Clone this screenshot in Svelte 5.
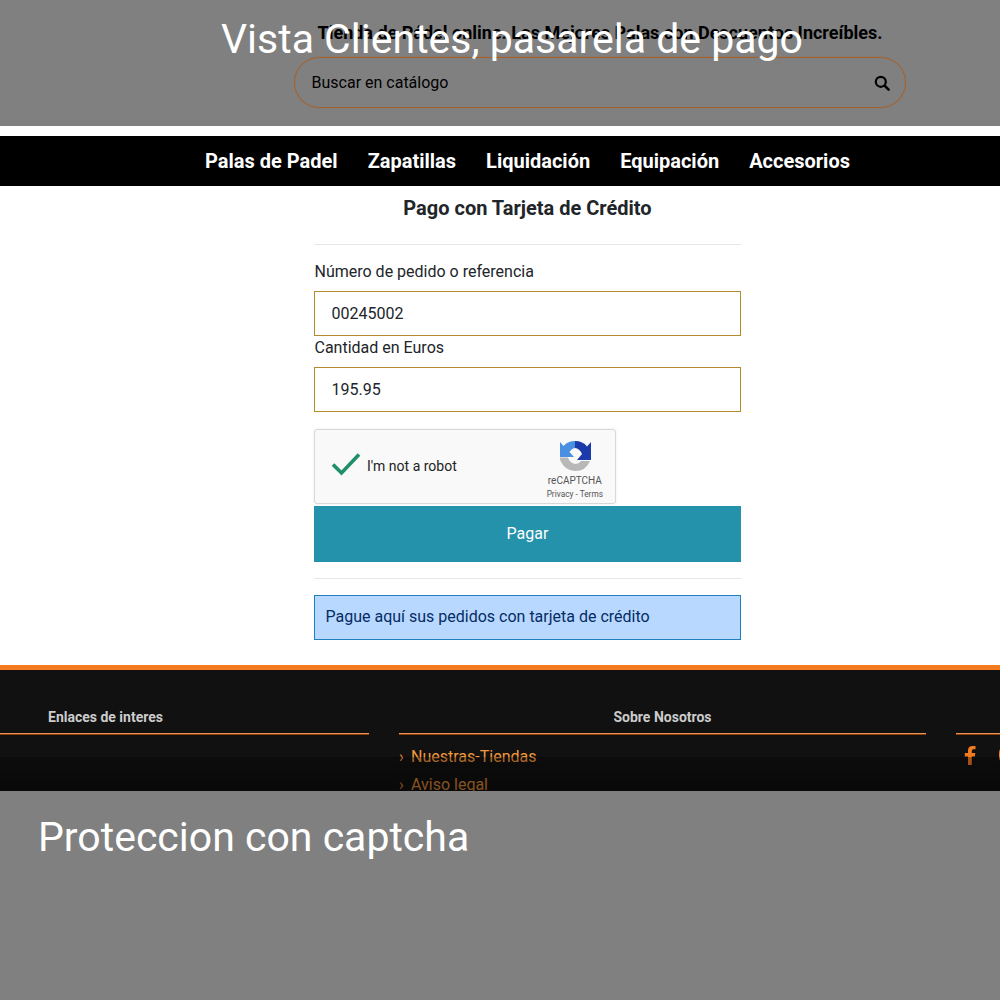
<script>
  const navLinks = ["Palas de Padel", "Zapatillas", "Liquidación", "Equipación", "Accesorios"];
  const aboutLinks = ["Nuestras-Tiendas", "Aviso legal"];
</script>

<div class="page">
  <header class="top">
    <h1 class="caption caption-top">Vista Clientes, pasarela de pago</h1>
    <p class="tagline">Tienda de Pádel online. Las Mejores Palas con Descuentos Increíbles.</p>
    <div class="search">
      <span>Buscar en catálogo</span>
      <svg width="16" height="16" viewBox="0 0 16 16" aria-hidden="true">
        <circle cx="6.8" cy="6.8" r="5" fill="none" stroke="#000" stroke-width="2.2" />
        <path d="M10.6 10.6 L14.6 14.6" stroke="#000" stroke-width="2.6" stroke-linecap="round" />
      </svg>
    </div>
  </header>

  <nav class="nav">
    {#each navLinks as link}
      <a href="#top">{link}</a>
    {/each}
  </nav>

  <main class="main">
    <h2>Pago con Tarjeta de Crédito</h2>
    <hr />
    <label for="ref">Número de pedido o referencia</label>
    <input id="ref" value="00245002" />
    <label for="amount">Cantidad en Euros</label>
    <input id="amount" value="195.95" />

    <div class="captcha">
      <svg class="check" width="30" height="24" viewBox="0 0 30 24" aria-hidden="true">
        <path d="M2 12.5 L10.5 21 L28 2.5" fill="none" stroke="#1f8f69" stroke-width="3.6" />
      </svg>
      <span class="robot">I'm not a robot</span>
      <div class="brand">
        <svg width="32" height="32" viewBox="0 0 32 32" aria-hidden="true">
          <path d="M1 17.5 H9 Q11 24 17 24 Q20 24 22 21 H31 Q27 31 16 31 Q6 31 1 20 Z" fill="#b8b8b8" />
          <path d="M16 1 Q9 1 4.500 6 L1 2 V17 H15 L10.500 12 Q12.500 8.500 16 8 Z" fill="#4a90e2" />
          <path d="M16 1 Q24 1 28 6.500 L32 2 V20 H18 L23 14 Q20.500 8.500 16 8 Z" fill="#1c3aa9" />
        </svg>
        <span class="brand-name">reCAPTCHA</span>
        <span class="brand-links">Privacy - Terms</span>
      </div>
    </div>

    <button class="pay" type="button">Pagar</button>
    <hr class="rule-bottom" />
    <div class="notice">Pague aquí sus pedidos con tarjeta de crédito</div>
  </main>

  <footer class="footer">
    <div class="col col-links">
      <h3>Enlaces de interes</h3>
    </div>
    <div class="col col-about">
      <h3>Sobre Nosotros</h3>
      <ul>
        {#each aboutLinks as link}
          <li><span class="chev">›</span><a href="#top">{link}</a></li>
        {/each}
      </ul>
    </div>
    <div class="col col-social">
      <div class="social">
        <svg width="12" height="20" viewBox="0 0 12 20" aria-hidden="true">
          <path d="M4 20 L4 11.500 L0.800 11.500 L0.800 8 L4 8 L4 5.500 Q4 1 8.500 1 L11.500 1 L11.500 4.300 L9.500 4.300 Q7.800 4.300 7.800 6 L7.800 8 L11.300 8 L10.800 11.500 L7.800 11.500 L7.800 20 Z" fill="#f47a1f" />
        </svg>
        <span class="ring"></span>
      </div>
    </div>
    <div class="fade"></div>
  </footer>

  <section class="bottom">
    <p class="caption">Proteccion con captcha</p>
  </section>
</div>

<style>
  :global(body) {
    margin: 0;
    background: #fff;
  }

  .page {
    width: 1000px;
    height: 1000px;
    overflow: hidden;
    font-family: Roboto, "Liberation Sans", sans-serif;
    color: #212529;
  }

  .caption {
    margin: 0;
    font-size: 41px;
    font-weight: 400;
    line-height: 50px;
    color: #fff;
    white-space: nowrap;
  }

  .top {
    position: relative;
    height: 126px;
    background: #808080;
    box-sizing: border-box;
    padding: 22px 94px 0 294px;
  }

  .caption-top {
    position: absolute;
    left: 221px;
    top: 14px;
  }

  .tagline {
    margin: 0 0 14px;
    font-size: 18px;
    font-weight: 700;
    line-height: 21px;
    color: #000;
    text-align: center;
    white-space: nowrap;
  }

  .search {
    display: flex;
    align-items: center;
    justify-content: space-between;
    height: 51px;
    box-sizing: border-box;
    padding: 0 15px 0 16.500px;
    border: 1px solid #a5602a;
    border-radius: 26px;
    box-shadow: 0 0 1px #b0601a;
    font-size: 16px;
    color: #000;
  }

  .nav {
    display: flex;
    justify-content: center;
    gap: 30px;
    height: 50px;
    margin-top: 10px;
    padding-left: 55px;
    align-items: center;
    background: #000;
  }

  .nav a {
    color: #fff;
    font-size: 20px;
    font-weight: 700;
    text-decoration: none;
  }

  .main {
    display: flex;
    flex-direction: column;
    width: 427px;
    height: 479px;
    margin-left: 314px;
    box-sizing: border-box;
    padding-top: 10px;
  }

  h2 {
    margin: 0;
    font-size: 20px;
    font-weight: 700;
    line-height: 24px;
    text-align: center;
  }

  hr {
    width: 100%;
    margin: 24px 0 17px;
    border: 0;
    border-top: 1px solid #e6e6e6;
  }

  label {
    padding-left: 0.500px;
    font-size: 16px;
    line-height: 20px;
    margin-bottom: 9px;
  }

  label[for="amount"] {
    margin-top: 2px;
    margin-bottom: 9px;
  }

  input {
    height: 45px;
    box-sizing: border-box;
    padding: 0 16.500px;
    border: 1px solid #b58a2e;
    border-radius: 0;
    font: 16px Roboto, sans-serif;
    color: #212529;
    outline: none;
  }

  .captcha {
    position: relative;
    display: flex;
    align-items: center;
    width: 302px;
    height: 75px;
    box-sizing: border-box;
    margin-top: 17px;
    padding-left: 16px;
    background: #f9f9f9;
    border: 1px solid #d8d8d8;
    border-radius: 3px;
    box-shadow: 0 0 3px rgba(0, 0, 0, 0.08);
  }

  .check {
    margin-bottom: 6px;
  }

  .robot {
    margin-left: 6px;
    margin-bottom: 2px;
    font-size: 14px;
    color: #222;
  }

  .brand {
    position: absolute;
    right: 12px;
    top: 10px;
    display: flex;
    flex-direction: column;
    align-items: center;
  }

  .brand-name {
    margin-top: 3px;
    font-size: 10px;
    line-height: 12px;
    color: #555;
  }

  .brand-links {
    margin-top: 1px;
    font-size: 8.3px;
    line-height: 12px;
    color: #555;
    white-space: nowrap;
  }

  .pay {
    height: 56px;
    margin-top: 2px;
    padding: 0 0 2px;
    border: 0;
    background: #2492aa;
    color: #fff;
    font: 16px Roboto, sans-serif;
  }

  .rule-bottom {
    margin: 16px 0;
  }

  .notice {
    height: 45px;
    box-sizing: border-box;
    padding-left: 10.500px;
    line-height: 42px;
    background: #b8d8ff;
    border: 1px solid #1f7fbf;
    color: #052c65;
    font-size: 16px;
  }

  .footer {
    position: relative;
    display: grid;
    grid-template-columns: 369px 527px 1fr;
    gap: 30px;
    height: 126px;
    box-sizing: border-box;
    overflow: hidden;
    background: #111;
    border-top: 5px solid #f47a1f;
    padding-top: 38px;
  }

  h3 {
    margin: 0;
    height: 25px;
    font-size: 14px;
    font-weight: 700;
    line-height: 18px;
    color: #ccc;
    border-bottom: 1px solid #e8925a;
    box-shadow: 0 1px 0 rgba(244, 106, 0, 0.55);
  }

  .col-links h3 {
    padding-left: 48px;
  }

  .col-about h3 {
    text-align: center;
  }

  .col-social {
    margin-top: 25px;
    border-top: 1px solid #e8925a;
    box-shadow: 0 1px 0 rgba(244, 106, 0, 0.55) inset;
    margin-right: -40px;
  }

  ul {
    margin: 0;
    padding: 11px 0 0;
    list-style: none;
  }

  li {
    height: 28px;
    font-size: 16px;
    line-height: 24px;
  }

  .chev {
    display: inline-block;
    width: 12px;
    color: #f0923a;
  }

  li a {
    color: #f59a3c;
    text-decoration: none;
  }

  .social {
    display: flex;
    align-items: center;
    gap: 23px;
    padding: 11px 0 0 8px;
  }

  .ring {
    width: 16px;
    height: 18px;
    flex: none;
    box-sizing: border-box;
    border: 3px solid #f47a1f;
    border-radius: 7px;
  }

  .fade {
    position: absolute;
    left: 0;
    right: 0;
    bottom: 0;
    height: 34px;
    background: linear-gradient(rgba(0, 0, 0, 0.3), rgba(0, 0, 0, 0.5));
  }

  .bottom {
    height: 209px;
    box-sizing: border-box;
    padding: 21px 0 0 38px;
    background: #808080;
  }
</style>
